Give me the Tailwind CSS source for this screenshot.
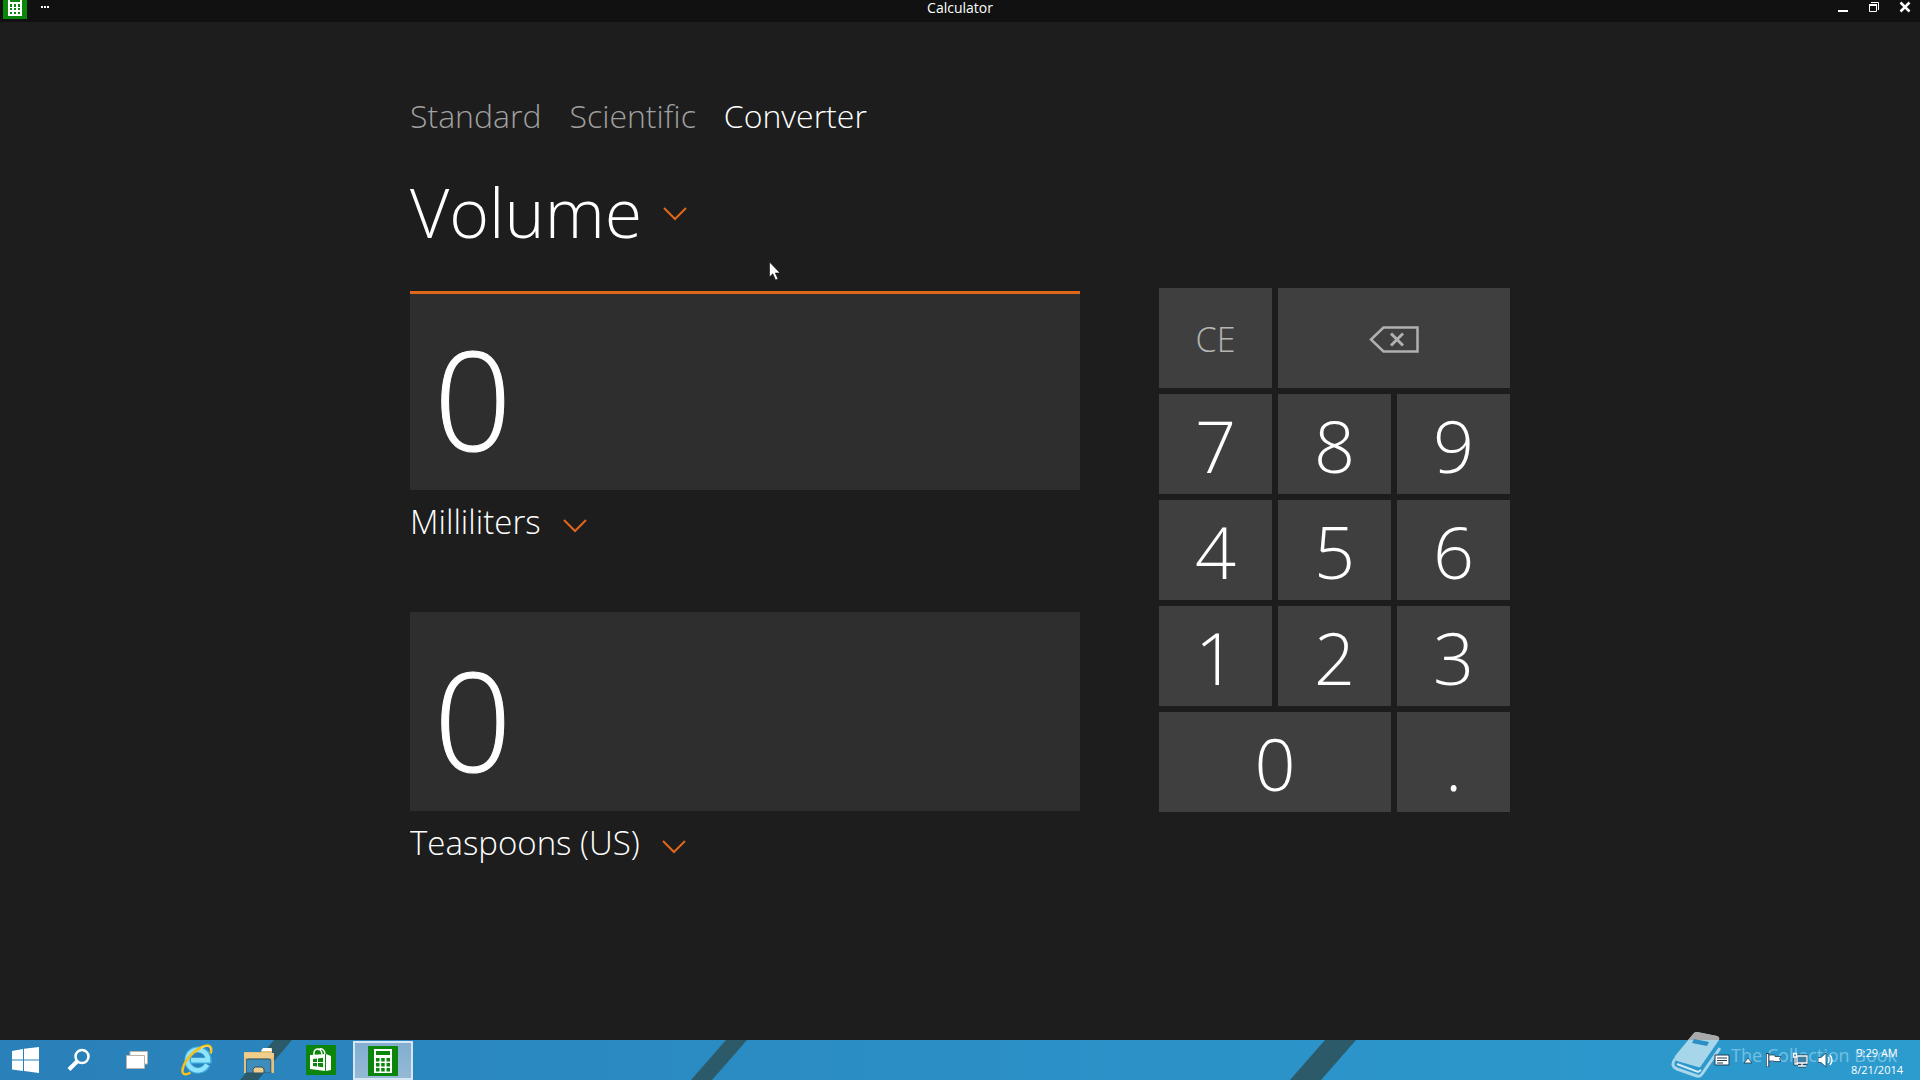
<!DOCTYPE html>
<html lang="en">
<head>
  <meta charset="UTF-8">
  <meta name="viewport" content="width=device-width, initial-scale=1.0">

  <title>Calculator</title>

  <!-- Tailwind CSS -->
  <script src="https://cdn.jsdelivr.net/npm/@tailwindcss/browser@4"></script>
</head>

<body class="relative flex min-h-screen flex-col overflow-hidden bg-[#1d1d1d] font-['Open_Sans',sans-serif] text-white">

  <!-- Title Bar -->
  <header class="grid h-[22px] grid-cols-3 items-start bg-[#111111]">
    <div class="flex items-start gap-3 pl-[3px]">
      <svg class="h-[19px] w-6" viewBox="0 0 24 19">
        <rect width="24" height="19" fill="#0a870a"/>
        <path d="M5 0h14v16H5z" fill="#fff"/>
        <path d="M7 0h10v2H7zM7 4h2v3H7zM11 4h2v3h-2zM15 4h2v3h-2zM7 8h2v2H7zM11 8h2v2h-2zM15 8h2v2h-2zM7 12h2v2H7zM11 12h2v2h-2zM15 12h2v2h-2z" fill="#0a870a"/>
      </svg>
      <button class="h-4" aria-label="App commands">
        <svg class="h-4 w-3" viewBox="0 0 12 16" fill="#fff">
          <path d="M2 6h2v2H2zM5 6h2v2H5zM8 6h2v2H8z"/>
        </svg>
      </button>
    </div>
    <h1 class="text-center text-sm leading-4">Calculator</h1>
    <div class="flex justify-end">
      <button class="flex h-4 w-[31px] justify-center" aria-label="Minimize">
        <svg class="h-4 w-3" viewBox="0 0 12 16"><path d="M1 10h10v2H1z" fill="#fff"/></svg>
      </button>
      <button class="flex h-4 w-[31px] justify-center" aria-label="Restore">
        <svg class="h-4 w-3" viewBox="0 0 12 16" fill="none" stroke="#fff">
          <path d="M3 2.5h7.500v7.500M1.500 5v6.500h7V5"/>
          <path d="M1 5h8" stroke-width="2"/>
        </svg>
      </button>
      <button class="flex h-4 w-[31px] justify-center" aria-label="Close">
        <svg class="h-4 w-3" viewBox="0 0 12 16" fill="none" stroke="#fff" stroke-width="2.500"><path d="M1.500 2.500l9 9M10.500 2.500l-9 9"/></svg>
      </button>
    </div>
  </header>

  <!-- Main Content -->
  <main class="mx-auto w-full max-w-[1100px] flex-1 pt-[70px] font-light">
    <nav class="flex gap-7 text-[32px] leading-[48px] text-[#a0a0a0]">
      <button>Standard</button>
      <button>Scientific</button>
      <button class="text-white" aria-current="page">Converter</button>
    </nav>

    <label class="mt-6 flex w-max items-center gap-5">
      <select class="h-[100px] appearance-none pb-1 text-[68px] leading-[96px] outline-none" aria-label="Conversion type">
        <option>Volume</option>
      </select>
      <svg class="h-[14px] w-6" viewBox="0 0 24 14" fill="none" stroke="#e0681a" stroke-width="2"><path d="M1 1l11 11L23 1"/></svg>
    </label>

    <div class="mt-6 flex items-start justify-between">
      <!-- Values -->
      <div class="mt-[3px] w-[670px]">
        <input type="text" value="0" aria-label="Milliliters value" class="block h-[199px] w-full border-t-3 border-[#e0681a] bg-[#2e2e2e] px-6 pt-3 text-[136px] leading-none outline-none [-webkit-text-stroke:1px_white]">
        <label class="flex h-[122px] w-max gap-[22px]">
          <select class="mt-2 h-12 appearance-none text-[33px] leading-[48px] outline-none" aria-label="Input unit">
            <option>Milliliters</option>
          </select>
          <svg class="mt-[29px] h-[14px] w-6" viewBox="0 0 24 14" fill="none" stroke="#e0681a" stroke-width="2"><path d="M1 1l11 11L23 1"/></svg>
        </label>
        <input type="text" value="0" aria-label="Teaspoons value" class="block h-[199px] w-full border-t-3 border-transparent bg-[#2e2e2e] px-6 pt-3 text-[136px] leading-none outline-none [-webkit-text-stroke:1px_white]">
        <label class="flex w-max gap-[22px]">
          <select class="mt-2 h-12 appearance-none text-[33px] leading-[48px] outline-none" aria-label="Output unit">
            <option>Teaspoons (US)</option>
          </select>
          <svg class="mt-[29px] h-[14px] w-6" viewBox="0 0 24 14" fill="none" stroke="#e0681a" stroke-width="2"><path d="M1 1l11 11L23 1"/></svg>
        </label>
      </div>

      <!-- Keypad -->
      <div class="grid w-[351px] auto-rows-[100px] grid-cols-3 gap-[6px] text-[72px] leading-[90px]">
        <button class="bg-[#3f3f3f] pt-[2px] text-[34px] text-[#b4b4b4]">CE</button>
        <button class="col-span-2 flex items-center justify-center bg-[#3f3f3f] pt-[2px]" aria-label="Backspace">
          <svg class="h-[27px] w-[50px]" viewBox="0 0 50 27" fill="none" stroke="#b0b0b0" stroke-width="2.500">
            <path d="M2 13.500L14.500 1.500H48.500v24H14.500z"/>
            <path d="M22 7.500l12 12M34 7.500l-12 12" stroke-width="3"/>
          </svg>
        </button>
        <button class="bg-[#3f3f3f] pt-[2px]">7</button>
        <button class="bg-[#3f3f3f] pt-[2px]">8</button>
        <button class="bg-[#3f3f3f] pt-[2px]">9</button>
        <button class="bg-[#3f3f3f] pt-[2px]">4</button>
        <button class="bg-[#3f3f3f] pt-[2px]">5</button>
        <button class="bg-[#3f3f3f] pt-[2px]">6</button>
        <button class="bg-[#3f3f3f] pt-[2px]">1</button>
        <button class="bg-[#3f3f3f] pt-[2px]">2</button>
        <button class="bg-[#3f3f3f] pt-[2px]">3</button>
        <button class="col-span-2 bg-[#3f3f3f] pt-[2px]">0</button>
        <button class="bg-[#3f3f3f] pt-[2px]">.</button>
      </div>
    </div>
  </main>

  <!-- Taskbar -->
  <footer class="relative flex h-10 items-stretch justify-between bg-linear-to-r from-[#2a80b9] via-[#2b8fc6] to-[#2c9bce]">
    <!-- Wallpaper showing through the bar -->
    <svg class="absolute inset-0 h-10 w-[1920px]" viewBox="0 0 1920 40" fill="#2d5a68">
      <path d="M274 0h18l-34 40h-18zM726 0h21l-35 40h-21zM1325 0h31l-35 40h-31z"/>
    </svg>

    <div class="relative flex">
      <button class="flex w-[50px] items-center justify-center" aria-label="Start">
        <svg class="h-[26px] w-[27px]" viewBox="0 0 27 26" fill="#fff"><path d="M0 4l11-2v10.500H0zM12 1.800L27 0v12.500H12zM0 13.500h11V24L0 22.500zM12 13.500h15V26l-15-2z"/></svg>
      </button>
      <button class="flex w-[58px] items-center justify-center" aria-label="Search">
        <svg class="h-6 w-6" viewBox="0 0 24 24" fill="none" stroke="#fff"><circle cx="15" cy="8.500" r="6.500" stroke-width="2.500"/><path d="M10.500 13L2 21.500" stroke-width="4"/></svg>
      </button>
      <button class="flex w-[58px] items-center justify-center" aria-label="Task View">
        <svg class="h-[18px] w-[22px]" viewBox="0 0 22 18"><path d="M4 .5h17.500V13H4z" fill="#fff" stroke="#b9b4ae"/><path d="M.5 4.500h18v13H.5z" fill="#fff" stroke="#b9b4ae"/></svg>
      </button>
      <button class="flex w-[62px] items-center justify-center" aria-label="Internet Explorer">
        <svg class="h-8 w-8" viewBox="0 0 32 32" fill="none">
          <path d="M26.500 20.500A10.500 10.500 0 1 1 27.500 16.500H10" stroke="#3aa9dc" stroke-width="6.500"/>
          <path d="M26 20.500A10.300 10.300 0 1 1 27 16.300H10" stroke="#8fe3fb" stroke-width="4.500"/>
          <path d="M29.500 9.500C32 3 28.500-.5 21 3 11 7.500 1 20 1.500 27.500c.3 3.500 4 3.500 8 1" stroke="#f3c21b" stroke-width="2.500"/>
          <path d="M29.500 6C29.500 1 25 1.500 20 4.500" stroke="#fbe58a"/>
        </svg>
      </button>
      <button class="flex w-[62px] items-center justify-center" aria-label="File Explorer">
        <svg class="h-[26px] w-[30px]" viewBox="0 0 30 26">
          <path d="M0 5h17l3-4h8v24H0z" fill="#e5c07b"/>
          <path d="M19 1h8l1 3H17z" fill="#fff"/>
          <path d="M0 6h30v5H0z" fill="#efcd8c"/>
          <path d="M2 14q0-2 2-2h21q2 0 2 2v12H2z" fill="#3d8dbd" stroke="#2f4c61"/>
          <path d="M27.500 10H30v16h-2.500zM0 10h2v16H0z" fill="#e5c07b"/>
          <path d="M9 26v-4l2-2h7l2 2v4z" fill="#efcd8c" stroke="#2f4c61"/>
        </svg>
      </button>
      <button class="flex w-[62px] items-center justify-center" aria-label="Store">
        <svg class="h-[30px] w-[30px]" viewBox="0 0 30 30">
          <rect width="30" height="30" fill="#0b850b"/>
          <path d="M4 10l15-1v17L4 24zM20 9l5 2v14l-5 1z" fill="#fff"/>
          <path d="M8 11C7 2 15 2 16 9M12 5c3-3 7 0 7 4" fill="none" stroke="#fff" stroke-width="1.500"/>
          <path d="M7 14l4-.5V17H7zM12 13.400l5-.6V17h-5zM7 18h4v3.500L7 21zM12 18h5v4.200l-5-.6z" fill="#0b850b"/>
        </svg>
      </button>
      <button class="mt-px ml-px flex w-[60px] items-center justify-center border-2 border-[#d6e6f2] bg-linear-to-b from-[#83aed0] to-[#94b9d6]" aria-label="Calculator">
        <svg class="h-[30px] w-[30px]" viewBox="0 0 30 30">
          <rect width="30" height="30" fill="#0b850b"/>
          <path d="M6 3h18v24H6z" fill="#fff"/>
          <path d="M8 5h14v4H8zM8 12h3.500v3.500H8zM13.200 12h3.500v3.500h-3.500zM18.500 12H22v3.500h-3.500zM8 17h3.500v3.500H8zM13.200 17h3.500v3.500h-3.500zM18.500 17H22v3.500h-3.500zM8 22h3.500v3.500H8zM13.200 22h3.500v3.500h-3.500zM18.500 22H22v3.500h-3.500z" fill="#0b850b"/>
        </svg>
      </button>
    </div>

    <!-- Tray -->
    <div class="relative z-10 flex items-center gap-[10px] pr-[15px]">
      <svg class="h-3 w-4" viewBox="0 0 16 12"><path d="M1 1h14v10H1z" fill="#fff" stroke="#1f3f55"/><path d="M3 4h10M3 6.500h10M3 9h6" stroke="#1f3f55"/></svg>
      <svg class="h-3 w-4" viewBox="0 0 16 12"><path d="M4 9l4-5 4 5z" fill="#fff" stroke="#1f3f55" stroke-width=".8"/></svg>
      <svg class="h-4 w-4" viewBox="0 0 16 16"><path d="M1.500 1v14" stroke="#1f3f55" stroke-width="3.500"/><path d="M3 3h6v1.500h6L13.500 7l1.500 2.500H8V9H3z" fill="#fff" stroke="#1f3f55" stroke-width=".8"/><path d="M1.500 2v12.500" stroke="#fff" stroke-width="1.500"/></svg>
      <svg class="h-4 w-4" viewBox="0 0 16 16" fill="none"><path d="M5 4h10v7H5zM10 11v3M6 14h8M3 6v6h3" stroke="#1f3f55" stroke-width="3"/><path d="M5.500 4.500h9v6h-9z" fill="#3d7fa5"/><path d="M5 4h10v7H5zM10 11v3M6 14h8M3 6v6h3M1.500 1.500h3V5h-3z" stroke="#fff" stroke-width="1.300"/></svg>
      <svg class="h-4 w-4" viewBox="0 0 16 16"><path d="M0 5.500h3L8 1v14l-5-4.500H0z" fill="#fff" stroke="#1f3f55" stroke-width=".8"/><path d="M10 5q2 3 0 6M12 3q4 5 0 10" fill="none" stroke="#fff" stroke-width="1.300"/></svg>
      <time class="ml-[5px] w-[56px] pt-[2px] text-center text-[11px] leading-[17px] whitespace-nowrap" datetime="2014-08-21T09:29">9:29 AM<br>8/21/2014</time>
    </div>
  </footer>

  <!-- Watermark -->
  <div class="pointer-events-none absolute right-[23px] bottom-[2px] flex items-center gap-[10px] text-[18px] text-[#a5d8ef]">
    <svg class="h-[46px] w-[50px]" viewBox="0 0 50 46">
      <path d="M4 24L23 1q1-1 3-1l20 4q3 1 2 4L30 34q-1 2-3 1L6 29q-4-2-2-5z" fill="#a7d5ea"/>
      <path d="M17 8L23 1q1-1 3-1l20 4q3 1 2 4z" fill="#a9a9a9"/>
      <path d="M23 7l15 3-2 4-15-3z" fill="#2b8fc4"/>
      <path d="M4 27q-5 7 2 10l20 7q3 1 5-2l18-26" fill="none" stroke="#a7d5ea" stroke-width="3"/>
      <path d="M6 32l21 8 3-2" fill="none" stroke="#d4ecf6" stroke-width="2"/>
    </svg>
    <span class="opacity-60">The Collection Book</span>
  </div>

  <!-- Pointer -->
  <svg class="pointer-events-none absolute top-[261px] left-[769px] h-5 w-3" viewBox="0 0 12 20"><path d="M.5 1v15l3.300-3.200L6.500 19l2.500-1-2.700-6h4.700z" fill="#fff" stroke="#111" stroke-width=".6"/></svg>

</body>
</html>
